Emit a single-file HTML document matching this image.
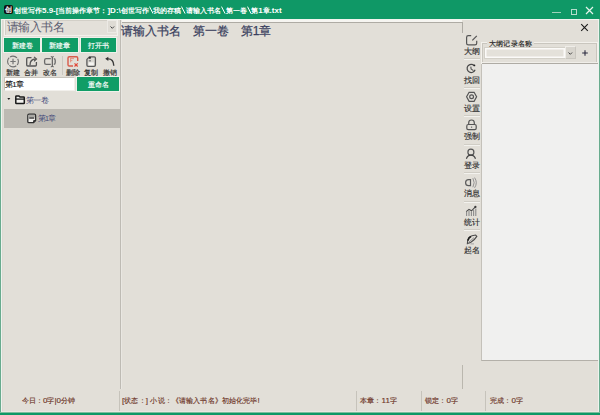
<!DOCTYPE html>
<html><head><meta charset="utf-8">
<style>
*{margin:0;padding:0;box-sizing:border-box}
html,body{width:600px;height:415px;overflow:hidden;background:#0f9866}
body{position:relative;font-family:"Liberation Sans",sans-serif;}
.a{position:absolute}
svg.a{overflow:visible}
.l{font-size:8px}
.bs{display:inline-block;vertical-align:-0.5px}
#win{position:absolute;left:1px;top:19px;width:598px;height:393px;background:#e2dfd8;border-left:1px solid #eef3ee;border-right:1px solid #eef3ee;border-bottom:1px solid #ede6e0;border-top:1px solid #f2f4ef}
.title{left:14px;top:4px;color:#fff;font-size:7px;font-weight:bold;white-space:nowrap;line-height:13px}
.btn{background:#109d66;box-shadow:0 0 0 1px #eef1ea;color:#fff;font-size:7px;text-align:center;line-height:15px;height:14px;white-space:nowrap;-webkit-text-stroke:0.15px #fff}
.tb{font-size:7px;color:#333;text-align:center;width:20px;line-height:9px;white-space:nowrap;-webkit-text-stroke:0.2px #333}
.side{left:461.5px;width:20px;text-align:center;font-size:8px;color:#2e2e2e;line-height:9px;white-space:nowrap;-webkit-text-stroke:0.15px #2e2e2e}
.sep{height:2px;background:#d0cdc5;border-bottom:1px solid #f3f2ee;left:464px;width:16px}
.st{font-size:7px;color:#6e3629;white-space:nowrap;line-height:10.5px;-webkit-text-stroke:0.15px #6e3629}
.vs{width:1px;background:#c6c3bb}
.ic{stroke:#555;fill:none;stroke-width:1.1}
</style></head><body>
<!-- title bar -->
<div class="a" style="left:4px;top:5px;width:9px;height:9px;background:#111;border-radius:2px"></div>
<div class="a" style="left:4.5px;top:4px;width:8px;font-size:7px;color:#fff;line-height:11px;text-align:center;-webkit-text-stroke:0.2px #fff">创</div>
<div class="a title">创世写作<span class="l">5.9-[</span>当前操作章节：<span class="l">]D:\</span>创世写作<svg class="bs" width="4.6" height="8"><path d="M0.5 0.6L4.1 7.6" stroke="#fff" stroke-width="1"/></svg>我的存稿<svg class="bs" width="4.6" height="8"><path d="M0.5 0.6L4.1 7.6" stroke="#fff" stroke-width="1"/></svg>请输入书名<svg class="bs" width="4.6" height="8"><path d="M0.5 0.6L4.1 7.6" stroke="#fff" stroke-width="1"/></svg>第一卷<svg class="bs" width="4.6" height="8"><path d="M0.5 0.6L4.1 7.6" stroke="#fff" stroke-width="1"/></svg>第<span class="l">1</span>章<span class="l">.txt</span></div>
<div class="a" style="left:552px;top:11.5px;width:9px;height:1.5px;background:#9fd2bb"></div>
<div class="a" style="left:570.5px;top:8.5px;width:6.5px;height:6.5px;border:1px solid #b5ddcb"></div>
<svg class="a" style="left:585px;top:6px" width="9" height="9"><path d="M1 1L8 8M8 1L1 8" stroke="#e6f4ec" stroke-width="1.2"/></svg>

<div id="win"></div>
<!-- bottom border -->
<div class="a" style="left:0;top:412px;width:600px;height:3px;background:#0f9866"></div>
<div class="a" style="left:0;top:412px;width:600px;height:1px;background:#7dbd9d"></div>
<div class="a" style="left:0;top:19px;width:1px;height:393px;background:#68ab8e"></div>
<div class="a" style="left:599px;top:19px;width:1px;height:393px;background:#68ab8e"></div>
<div class="a" style="left:2px;top:20px;width:1px;height:391px;background:#dcd9d2"></div>

<!-- left panel combo -->
<div class="a" style="left:4px;top:19px;width:114px;height:17px;background:#e3e0d9;border:1px solid #f3f1ec;box-shadow:inset 1px 1px 0 #d2cfc7"></div>
<div class="a" style="left:7px;top:19px;font-family:'Liberation Serif',serif;font-size:12px;color:#5d5e72;line-height:17px;letter-spacing:-0.6px">请输入书名</div>
<div class="a" style="left:107px;top:20px;width:10px;height:13px;background:#dedbd4;border:1px solid #eceae5"></div>
<svg class="a" style="left:109.5px;top:25.5px" width="5" height="3"><path d="M0.5 0.5L2.3 2.3L4.1 0.5" stroke="#444" fill="none" stroke-width="1"/></svg>

<div class="a btn" style="left:4px;top:38px;width:36px">新建卷</div>
<div class="a btn" style="left:42px;top:38px;width:35.6px">新建章</div>
<div class="a btn" style="left:81px;top:38px;width:35px">打开书</div>

<!-- toolbar icons -->
<svg class="a" style="left:0;top:0" width="600" height="110">
 <circle cx="13" cy="61.5" r="5.4" fill="none" stroke="#707070" stroke-width="1.1" stroke-dasharray="7.48 1" stroke-dashoffset="3.74"/>
 <path d="M13 58.8V64.2M10.3 61.5H15.7" stroke="#767676" stroke-width="1.2"/>
 <path d="M31.5 57.6H27.8Q26.7 57.6 26.7 58.7V64.9Q26.7 66 27.8 66H35.3Q36.4 66 36.4 64.9V62" fill="none" stroke="#555" stroke-width="1.3"/>
 <path d="M30 65.2Q30 59 35.6 59" fill="none" stroke="#555" stroke-width="1.3"/>
 <path d="M34 56.9L36.5 59L34 61.2" fill="none" stroke="#555" stroke-width="1.2"/>
 <rect x="44.6" y="58.7" width="10.6" height="5.6" rx="1.6" fill="none" stroke="#6a6a6a" stroke-width="1.3"/>
 <path d="M52.3 57V66.4" stroke="#e2dfd8" stroke-width="3"/>
 <path d="M52.3 57V66.4" stroke="#555" stroke-width="1.1"/>
 <path d="M50.8 56.6Q52.3 57.2 53.8 56.6M50.8 66.8Q52.3 66.2 53.8 66.8" fill="none" stroke="#555" stroke-width="0.9"/>
 <path d="M73 66H69.2Q68 66 68 64.8V57.9Q68 56.7 69.2 56.7H76.5Q77.7 56.7 77.7 57.9V61" fill="none" stroke="#d95a4a" stroke-width="1.4"/>
 <path d="M74.5 63.3L77.7 66.5M77.7 63.3L74.5 66.5" stroke="#e04a3a" stroke-width="1.2"/>
 <path d="M70 58.6H74M70.6 58.6V62.4M70.6 60.6H72.4" stroke="#e58a78" stroke-width="0.9"/>
 <path d="M89.4 56.9H94.2Q95.4 56.9 95.4 58.1V65.1Q95.4 66.3 94.2 66.3H88.1Q86.9 66.3 86.9 65.1V59.4Z" fill="#d9d7d1" stroke="#585858" stroke-width="1.3" stroke-linejoin="round"/>
 <circle cx="89.9" cy="57.8" r="1.1" fill="#2e2e2e"/>
 <rect x="88.6" y="62.4" width="5.2" height="2.9" fill="#f6f5f2"/>
 <rect x="88.8" y="60" width="2.2" height="1.5" fill="#8c8c8c"/>
 <path d="M105.2 58.8L108.3 56.7V60.9Z" fill="#333"/>
 <path d="M107.8 58.9Q113.6 58.6 113.8 65.8" fill="none" stroke="#3a3a3a" stroke-width="1.4"/>
 <!-- tree icons -->
 <path d="M7.3 98H10.3L8.8 100Z" fill="#222"/>
 <path d="M15.8 103V96.6Q15.8 95.9 16.5 95.9H19L20 97H23.6Q24.3 97 24.3 97.7V103Q24.3 103.6 23.7 103.6H16.4Q15.8 103.6 15.8 103Z" fill="#f2f1ee" stroke="#1a1a1a" stroke-width="1.5" stroke-linejoin="round"/>
 <path d="M15.8 99.1H24.3" stroke="#1a1a1a" stroke-width="1.3"/>
</svg>
<div class="a tb" style="left:3px;top:68px">新建</div>
<div class="a tb" style="left:21px;top:68px">合并</div>
<div class="a tb" style="left:39.5px;top:68px">改名</div>
<div class="a" style="left:62px;top:56px;width:1px;height:19px;background:#cbc8c0"></div>
<div class="a tb" style="left:63px;top:68px">删除</div>
<div class="a tb" style="left:81px;top:68px">复制</div>
<div class="a tb" style="left:99.5px;top:68px">撤销</div>

<div class="a" style="left:4px;top:77px;width:70.5px;height:14px;background:#fff;border-top:1px solid #c8c5bd;border-left:1px solid #c8c5bd;border-right:1px solid #f2f0ec;border-bottom:1px solid #f2f0ec"></div>
<div class="a" style="left:5px;top:78.5px;font-size:8px;color:#111;line-height:12px;letter-spacing:-0.6px;-webkit-text-stroke:0.15px #111">第<span style="font-size:7px">1</span>章</div>
<div class="a btn" style="left:77px;top:77px;width:42px">重命名</div>

<!-- tree -->
<div class="a" style="left:26px;top:95.5px;font-size:8px;color:#434979;line-height:10px;letter-spacing:-0.6px">第一卷</div>
<div class="a" style="left:4px;top:108.5px;width:116px;height:19px;background:#bdbab3"></div>
<svg class="a" style="left:0;top:0" width="60" height="130">
 <path d="M29 114.2H34.4Q35.6 114.2 35.6 115.4V120.6L33.6 122.6H29Q27.8 122.6 27.8 121.4V115.4Q27.8 114.2 29 114.2Z" fill="#f0efec" stroke="#2e2e2e" stroke-width="1.3" stroke-linejoin="round"/>
 <rect x="28.5" y="114.9" width="6.4" height="2.2" fill="#a9a8a4"/>
 <path d="M29.2 118H34.2" stroke="#222" stroke-width="1.3"/>
 <path d="M35.6 120.6H33.6V122.6" fill="none" stroke="#2e2e2e" stroke-width="1"/>
</svg>
<div class="a" style="left:37.5px;top:113.5px;font-size:8px;color:#434979;line-height:10px;letter-spacing:-0.6px">第<span style="font-size:7px">1</span>章</div>

<!-- separator -->
<div class="a" style="left:120px;top:20px;width:1px;height:369px;background:#bebbb4"></div>
<div class="a" style="left:121px;top:20px;width:1px;height:369px;background:#e9e7e2"></div>

<!-- editor -->
<div class="a" style="left:122px;top:20px;width:340px;height:2px;background:#f6f5f1"></div>
<div class="a" style="left:122px;top:22px;width:340px;height:1px;background:#aeaba4"></div>
<div class="a" style="left:462px;top:22px;width:1px;height:11px;background:#aeaba4"></div>
<div class="a" style="left:120.7px;top:23px;font-size:12px;color:#3a3f5e;line-height:16px;white-space:pre;-webkit-text-stroke:0.25px #3a3f5e">请输入书名　第一卷　第<span style="font-size:12px">1</span>章</div>
<div class="a" style="left:462px;top:365px;width:1px;height:24px;background:#bab7ae"></div>

<!-- sidebar -->
<svg class="a" style="left:0;top:0" width="600" height="260">
 <g fill="none" stroke="#555" stroke-width="1.2">
  <path d="M471.2 35.7H468.3Q466.6 35.7 466.6 37.4V43.2Q466.6 44.9 468.3 44.9H475Q476.7 44.9 476.7 43.2V40.8"/>
  <path d="M472.3 40.3L476.8 35.8"/>
  <path d="M474.2 65.6A4.1 4.1 0 1 0 475.1 69.8" stroke="#484848"/>
  <path d="M470.8 66.6L471.1 69L473.4 70.6" stroke="#555" stroke-width="1.1"/>
  <path d="M469.1 92.3H474.1L476.6 96.8L474.1 101.3H469.1L466.6 96.8Z"/>
  <circle cx="471.6" cy="96.8" r="1.9"/>
  <path d="M468.7 124.5V122.8A2.8 2.8 0 0 1 474.3 122.8V124.5"/>
  <rect x="466.8" y="124.5" width="9.4" height="5.2" rx="1.4"/>
  <circle cx="470.9" cy="152.2" r="3"/>
  <path d="M466.4 158.8Q467.6 155.2 470.9 155.2Q474.2 155.2 475.5 158.8" stroke="#404040"/>
  <path d="M470.5 179.7H468.6Q465.6 179.7 465.6 182.7Q465.6 185.7 468.6 185.7H470.5Z" stroke="#5a5a5a"/>
  <path d="M472.9 178.2Q475.4 182.7 472.9 187.2M474.6 177.6Q478 182.7 474.6 187.8" stroke="#8a8a8a" stroke-width="0.9"/>
  <path d="M466.6 216V212M469 216V210.6M471.4 216V211.4M473.6 216V210M475.8 216V208.6" stroke="#8c8c8c" stroke-width="1.1"/>
  <path d="M466.2 211.6L469 209.3L471.5 210.8L475.4 206.9" stroke="#4a4a4a" stroke-width="1.1"/>
  <path d="M467.3 244.2L467.8 239.6Q468.8 236.8 472 235.8L475.6 235L476.8 236.4Q474.6 240 471.2 242L468.2 243.4" stroke="#4a4a4a" stroke-width="1.1"/>
  <path d="M467.9 240.6Q468.5 237.6 471 236.5" stroke="#1e1e1e" stroke-width="1.7"/>
  <path d="M468.4 242.6L474 237.6" stroke="#888" stroke-width="0.9"/>
  <path d="M470.4 243.9H474" stroke="#a5a5a5" stroke-width="1"/>
 </g>
 <circle cx="475.4" cy="206.9" r="1.1" fill="#3a3a3a"/>
 <circle cx="474.4" cy="65.4" r="0.9" fill="#222"/>
 <circle cx="471.6" cy="127.1" r="0.7" fill="#555"/>
</svg>
<div class="a side" style="top:47px">大纲</div>
<div class="a sep" style="top:58px"></div>
<div class="a side" style="top:75.5px">找回</div>
<div class="a sep" style="top:87px"></div>
<div class="a side" style="top:103.5px">设置</div>
<div class="a sep" style="top:115px"></div>
<div class="a side" style="top:132px">强制</div>
<div class="a sep" style="top:144px"></div>
<div class="a side" style="top:160.5px">登录</div>
<div class="a sep" style="top:172px"></div>
<div class="a side" style="top:189px">消息</div>
<div class="a sep" style="top:201px"></div>
<div class="a side" style="top:217.5px">统计</div>
<div class="a sep" style="top:229px"></div>
<div class="a side" style="top:246px">起名</div>

<!-- right panel -->
<svg class="a" style="left:580px;top:23px" width="9" height="9"><path d="M1.2 1.2L7.8 7.8M7.8 1.2L1.2 7.8" stroke="#1a1a1a" stroke-width="1.1"/></svg>
<div class="a" style="left:481px;top:42px;width:117px;height:22px;border-top:1px solid #f3f1ec;border-left:1px solid #f3f1ec;border-right:1px solid #f3f1ec;box-shadow:inset 1px 1px 0 #c9c6be,inset -1px 0 0 #c9c6be"></div>
<div class="a" style="left:482px;top:62px;width:116px;height:2px;border-top:1px solid #f0eee9;border-bottom:1px solid #aeaba4"></div>
<div class="a" style="left:487px;top:38.5px;padding:0 2px;background:#e2dfd8;font-size:7px;color:#222;line-height:10px;-webkit-text-stroke:0.15px #222;letter-spacing:0.2px">大纲记录名称</div>
<div class="a" style="left:483.5px;top:47px;width:82px;height:12px;background:#e4e1da;border:1px solid #d3d0c8;box-shadow:inset 0 0 0 1.5px #fbfaf8"></div>
<div class="a" style="left:565px;top:46px;width:10.5px;height:13px;background:#d8d5ce;border-top:1px solid #efede8;border-left:1px solid #efede8;border-right:1px solid #c9c6bf;border-bottom:1px solid #c9c6bf"></div>
<svg class="a" style="left:568.2px;top:51.5px" width="5" height="3"><path d="M0.5 0.5L2.3 2.3L4.1 0.5" stroke="#444" fill="none" stroke-width="1"/></svg>
<svg class="a" style="left:582px;top:49.5px" width="7" height="7"><path d="M3 0.2V5.8M0.2 3H5.8" stroke="#2a2a40" stroke-width="1.1"/></svg>
<div class="a" style="left:481px;top:64px;width:117px;height:297px;background:#f0f0ef;border-left:1px solid #c4c1ba;border-bottom:1px solid #b3b0a9"></div>
<!-- status bar -->
<div class="a st" style="left:22px;top:396px">今日：<span class="l">0</span>字<span class="l">|0</span>分钟</div>
<div class="a vs" style="left:119px;top:391px;height:20px"></div>
<div class="a st" style="left:122px;top:396px;letter-spacing:0.13px"><span class="l">[</span>状态：<span class="l">] </span>小说：《请输入书名》初始化完毕<span class="l">!</span></div>
<div class="a vs" style="left:356px;top:391px;height:20px"></div>
<div class="a st" style="left:359.5px;top:396px;letter-spacing:0.3px">本章：<span class="l">11</span>字</div>
<div class="a vs" style="left:421px;top:391px;height:20px"></div>
<div class="a st" style="left:424.5px;top:396px;letter-spacing:0.3px">锁定：<span class="l">0</span>字</div>
<div class="a vs" style="left:485px;top:391px;height:20px"></div>
<div class="a st" style="left:490px;top:396px;letter-spacing:0.2px">完成：<span class="l">0</span>字</div>
</body></html>
